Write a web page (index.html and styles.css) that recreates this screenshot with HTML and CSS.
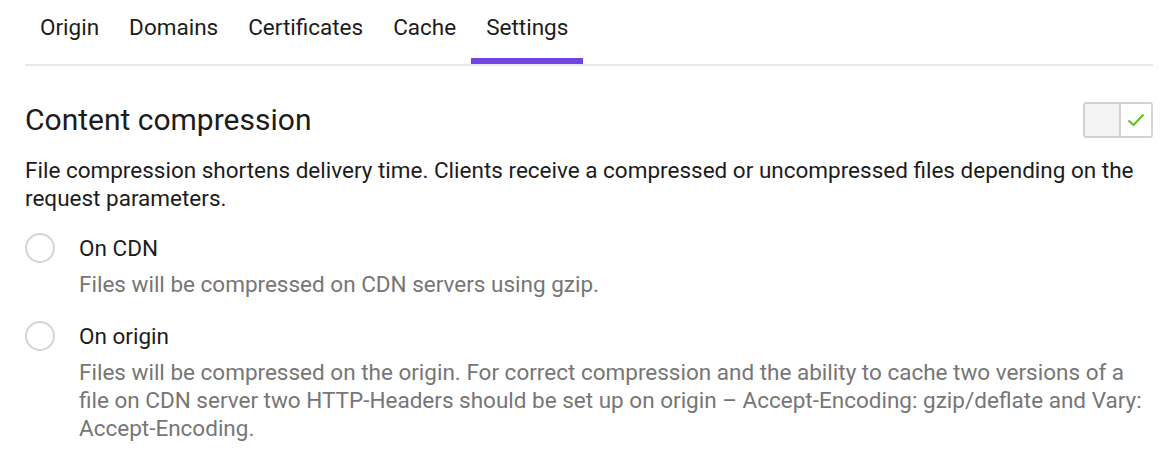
FILE: index.html
```html
<!DOCTYPE html>
<html lang="en">
<head>
  <meta charset="UTF-8">
  <meta name="viewport" content="width=device-width, initial-scale=1.0">
  <title>Resource settings</title>
  <link rel="stylesheet" href="styles.css">
</head>
<body>
  <div class="page">
    <nav class="tabs">
      <a class="tab">Origin</a>
      <a class="tab">Domains</a>
      <a class="tab">Certificates</a>
      <a class="tab">Cache</a>
      <a class="tab tab-active">Settings</a>
    </nav>

    <section class="setting">
      <div class="setting-head">
        <h2 class="setting-title">Content compression</h2>
        <div class="switch">
          <span class="switch-off"></span>
          <span class="switch-on">
            <svg width="18" height="14" viewBox="0 0 18 14">
              <path d="M1.5 7.5 L6.5 12 L16.5 1.5" fill="none" stroke="#5cc41e" stroke-width="2"/>
            </svg>
          </span>
        </div>
      </div>
      <p class="setting-desc">
        File compression shortens delivery time. Clients receive a compressed or uncompressed files depending on the request parameters.
      </p>

      <div class="options">
        <label class="option">
          <span class="radio"></span>
          <span class="option-label">On CDN</span>
          <span class="option-desc">Files will be compressed on CDN servers using gzip.</span>
        </label>
        <label class="option">
          <span class="radio"></span>
          <span class="option-label">On origin</span>
          <span class="option-desc">Files will be compressed on the origin. For correct compression and the ability to cache two versions of a file on CDN server two HTTP-Headers should be set up on origin – Accept-Encoding: gzip/deflate and Vary: Accept-Encoding.</span>
        </label>
      </div>
    </section>
  </div>
</body>
</html>
```

FILE: styles.css
```css
body {
  margin: 0;
  padding: 0 21px 0 25px;
  font-family: Roboto, 'Liberation Sans', sans-serif;
  color: #1c1c1c;
  background: #fff;
}

.tabs {
  display: flex;
  border-bottom: 2px solid #e8e8e8;
}

.tab {
  padding: 15px 15px 19px;
  font-size: 22.5px;
  line-height: 24px;
  color: #1c1c1c;
  border-bottom: 6px solid transparent;
  cursor: pointer;
}

.tab-active {
  border-bottom-color: #6e44e3;
}

.setting {
  padding-top: 36px;
}

.setting-head {
  display: flex;
  align-items: center;
  justify-content: space-between;
  height: 36px;
}

.setting-title {
  margin: 0;
  font-size: 30px;
  font-weight: 400;
  line-height: 36px;
}

.switch {
  display: flex;
  width: 66px;
  height: 32px;
  border: 2px solid #d2d2d2;
  border-radius: 3px;
}

.switch-off {
  width: 34px;
  background: #f4f4f4;
  border-right: 2px solid #d2d2d2;
}

.switch-on {
  flex: 1;
  display: flex;
  align-items: center;
  justify-content: center;
}

.setting-desc {
  margin: 18px 0 0;
  font-size: 22.5px;
  line-height: 28px;
}

.options {
  margin-top: 21px;
}

.option {
  display: grid;
  grid-template-columns: 30px 1fr;
  column-gap: 24px;
  margin-bottom: 23px;
}

.radio {
  width: 26px;
  height: 26px;
  border: 2px solid #d4d4d4;
  border-radius: 50%;
  align-self: center;
}

.option-label {
  font-size: 22.5px;
  line-height: 28px;
  padding: 1px 0;
}

.option-desc {
  grid-column: 2;
  margin-top: 7px;
  font-size: 22.5px;
  line-height: 28px;
  color: #767676;
}
```
